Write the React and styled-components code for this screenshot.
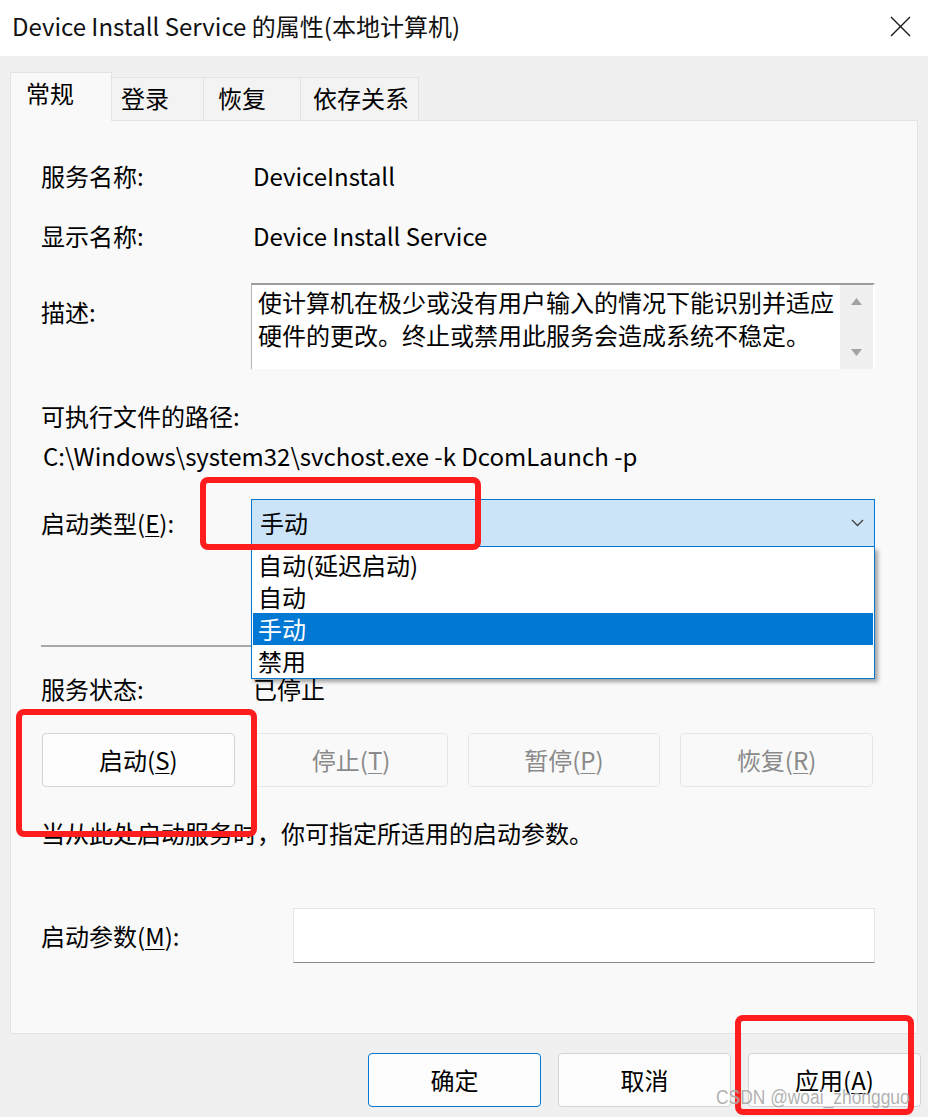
import React from 'react';
import styled, { createGlobalStyle } from 'styled-components';

const GlobalStyle = createGlobalStyle`
	html, body {
		margin: 0;
		padding: 0;
		background: #f0f0f0;
	}
	body {
		font-family: "Noto Sans CJK SC", "Noto Sans", sans-serif;
		color: #000000;
	}
`;

const startupTypes = ['自动(延迟启动)', '自动', '手动', '禁用'];

const CloseIcon = () => (
	<svg width="21" height="21" viewBox="0 0 21 21">
		<path d="M1 1 L20 20 M20 1 L1 20" stroke="#1a1a1a" strokeWidth="1.4" fill="none" />
	</svg>
);

const Chevron = () => (
	<svg width="13" height="8" viewBox="0 0 13 8">
		<path d="M1 1 L6.5 6.5 L12 1" stroke="#404040" strokeWidth="1.3" fill="none" />
	</svg>
);

const Arrow = ({ down }) => (
	<svg width="11" height="7" viewBox="0 0 11 7">
		<path d={down ? 'M0 0 L11 0 L5.5 7 Z' : 'M0 7 L11 7 L5.5 0 Z'} fill="#a3a3a3" />
	</svg>
);

const App = () => {
	return (
		<Window>
			<GlobalStyle />
			<TitleBar>
				<Title>Device Install Service 的属性(本地计算机)</Title>
				<CloseIcon />
			</TitleBar>
			<Body>
				<Tabs>
					<Tab active width={102} inset={15}>常规</Tab>
					<Tab width={93} inset={9}>登录</Tab>
					<Tab width={98} inset={14}>恢复</Tab>
					<Tab width={119} inset={12}>依存关系</Tab>
				</Tabs>
				<Panel>
					<Field>
						<Label>服务名称:</Label>
						<Value>DeviceInstall</Value>
					</Field>
					<Field gap={28}>
						<Label>显示名称:</Label>
						<Value>Device Install Service</Value>
					</Field>
					<Field gap={31} top>
						<Label offset={13}>描述:</Label>
						<DescBox>
							<DescText>
								使计算机在极少或没有用户输入的情况下能识别并适应
								<br />
								硬件的更改。终止或禁用此服务会造成系统不稳定。
							</DescText>
							<ScrollBar>
								<Arrow />
								<Arrow down />
							</ScrollBar>
						</DescBox>
					</Field>
					<Line gap={31}>可执行文件的路径:</Line>
					<Line gap={8} indent={2}>C:\Windows\system32\svchost.exe -k DcomLaunch -p</Line>
					<Field gap={27}>
						<Label>
							启动类型(<u>E</u>):
						</Label>
						<ComboWrap>
							<Combo>
								<span>手动</span>
								<Chevron />
							</Combo>
							<DropList>
								{startupTypes.map((t) => (
									<DropItem key={t} selected={t === '手动'}>
										{t}
									</DropItem>
								))}
							</DropList>
						</ComboWrap>
					</Field>
					<Separator />
					<Field gap={26}>
						<Label>服务状态:</Label>
						<Value>已停止</Value>
					</Field>
					<ButtonRow>
						<ActionButton>
							启动(<u>S</u>)
						</ActionButton>
						<ActionButton disabled>
							停止(<u>T</u>)
						</ActionButton>
						<ActionButton disabled>
							暂停(<u>P</u>)
						</ActionButton>
						<ActionButton disabled>
							恢复(<u>R</u>)
						</ActionButton>
					</ButtonRow>
					<Line gap={30}>当从此处启动服务时，你可指定所适用的启动参数。</Line>
					<ParamField>
						<Label>
							启动参数(<u>M</u>):
						</Label>
						<ParamInput />
					</ParamField>
				</Panel>
				<Footer>
					<DialogButton primary>确定</DialogButton>
					<DialogButton>取消</DialogButton>
					<DialogButton>
						应用(<u>A</u>)
					</DialogButton>
				</Footer>
			</Body>
			<Marker x={200} y={477} w={281} h={73} />
			<Marker x={16} y={709} w={241} h={128} />
			<Marker x={735} y={1015} w={179} h={100} />
			<Watermark>CSDN @woai_zhongguo</Watermark>
		</Window>
	);
};

const Window = styled.div`
	position: relative;
	width: 928px;
	height: 1117px;
	overflow: hidden;
	background: #f0f0f0;
	font-size: 24px;
	line-height: 32px;

	u {
		text-decoration-thickness: 1px;
		text-underline-offset: 3px;
	}
`;

const TitleBar = styled.div`
	height: 56px;
	box-sizing: border-box;
	background: #ffffff;
	display: flex;
	align-items: center;
	justify-content: space-between;
	padding: 0 17px 4px 12px;
`;

const Title = styled.div`
	font-size: 24px;
	color: #111111;
	white-space: nowrap;
`;

const Body = styled.div`
	padding: 16px 10px 0 10px;
`;

const Tabs = styled.div`
	display: flex;
	align-items: flex-end;
	height: 48px;
`;

const Tab = styled.div`
	position: relative;
	z-index: ${(props) => (props.active ? 2 : 1)};
	width: ${(props) => props.width}px;
	height: ${(props) => (props.active ? 49 : 43)}px;
	margin-bottom: ${(props) => (props.active ? -1 : 0)}px;
	box-sizing: border-box;
	padding: 4px 0 0 ${(props) => props.inset}px;
	background: ${(props) => (props.active ? '#f9f9f9' : '#f3f3f3')};
	border: 1px solid #e3e3e3;
	border-bottom: none;
	margin-left: ${(props) => (props.active ? 0 : -1)}px;
`;

const Panel = styled.div`
	position: relative;
	height: 914px;
	box-sizing: border-box;
	background: #f9f9f9;
	border: 1px solid #e3e3e3;
	padding: 39px 0 0 30px;
`;

const Field = styled.div`
	display: grid;
	grid-template-columns: 210px 624px;
	align-items: ${(props) => (props.top ? 'start' : 'center')};
	margin-top: ${(props) => props.gap || 0}px;
`;

const Label = styled.div`
	margin-top: ${(props) => props.offset || 0}px;
	white-space: nowrap;
`;

const Value = styled.div`
	padding-left: 2px;
	white-space: nowrap;
`;

const DescBox = styled.div`
	display: flex;
	height: 86px;
	box-sizing: border-box;
	background: #ffffff;
	border-top: 2px solid #9c9c9c;
	border-left: 1px solid #b4b4b4;
	border-right: 2px solid #ffffff;
`;

const DescText = styled.div`
	flex: 1;
	padding: 0 0 0 6px;
	line-height: 33px;
	white-space: nowrap;
`;

const ScrollBar = styled.div`
	width: 33px;
	background: #f0f0f0;
	display: flex;
	flex-direction: column;
	align-items: center;
	justify-content: space-between;
	padding: 13px 0 13px;
	box-sizing: border-box;
`;

const Line = styled.div`
	margin-top: ${(props) => props.gap || 0}px;
	padding-left: ${(props) => props.indent || 0}px;
	white-space: nowrap;
`;

const ComboWrap = styled.div`
	position: relative;
`;

const Combo = styled.div`
	height: 48px;
	box-sizing: border-box;
	display: flex;
	align-items: center;
	justify-content: space-between;
	padding: 0 10px 0 8px;
	background: #cce4f7;
	border: 1px solid #0078d4;
`;

const DropList = styled.div`
	position: absolute;
	top: 100%;
	left: 0;
	z-index: 5;
	width: 624px;
	box-sizing: border-box;
	padding: 2px 1px 1px;
	background: #ffffff;
	border: 1px solid #0078d4;
	border-top: none;
	box-shadow: 3px 3px 4px rgba(0, 0, 0, 0.35);
`;

const DropItem = styled.div`
	height: 32px;
	padding-left: 5px;
	background: ${(props) => (props.selected ? '#0078d4' : 'transparent')};
	color: ${(props) => (props.selected ? '#ffffff' : '#000000')};
`;

const Separator = styled.div`
	width: 834px;
	height: 2px;
	margin-top: 98px;
	background: #a8a8a8;
`;

const ButtonRow = styled.div`
	display: grid;
	grid-template-columns: repeat(4, 1fr);
	gap: 20px;
	width: 831px;
	margin: 28px 0 0 1px;
`;

const ActionButton = styled.div`
	height: 54px;
	box-sizing: border-box;
	display: flex;
	align-items: center;
	justify-content: center;
	border-radius: 4px;
	background: ${(props) => (props.disabled ? '#f9f9f9' : '#fdfdfd')};
	border: 1px solid ${(props) => (props.disabled ? '#e6e6e6' : '#d3d3d3')};
	color: ${(props) => (props.disabled ? '#8a8a8a' : '#000000')};
`;

const ParamField = styled.div`
	display: grid;
	grid-template-columns: 252px 582px;
	align-items: center;
	margin-top: 59px;
`;

const ParamInput = styled.div`
	height: 55px;
	box-sizing: border-box;
	background: #ffffff;
	border: 1px solid #e6e6e6;
	border-bottom: 1px solid #8a8a8a;
`;

const Footer = styled.div`
	display: flex;
	justify-content: flex-end;
	gap: 17px;
	padding: 19px 0 0 0;
	margin-right: -3px;
`;

const DialogButton = styled.div`
	width: 173px;
	height: 54px;
	box-sizing: border-box;
	display: flex;
	align-items: center;
	justify-content: center;
	border-radius: 4px;
	background: #fdfdfd;
	border: 1px solid ${(props) => (props.primary ? '#0078d4' : '#d3d3d3')};
`;

const Marker = styled.div`
	position: absolute;
	left: ${(props) => props.x}px;
	top: ${(props) => props.y}px;
	width: ${(props) => props.w}px;
	height: ${(props) => props.h}px;
	box-sizing: border-box;
	border: 6px solid #ff1d1d;
	border-radius: 8px;
	z-index: 10;
`;

const Watermark = styled.div`
	position: absolute;
	left: 716px;
	top: 1084px;
	z-index: 11;
	font-family: "Liberation Sans", Arial, sans-serif;
	font-size: 20px;
	line-height: 26px;
	color: rgba(110, 110, 110, 0.55);
	text-shadow: 0 0 1px rgba(255, 255, 255, 0.8);
	transform: scaleX(0.87);
	transform-origin: left center;
	white-space: nowrap;
`;

export default App;
